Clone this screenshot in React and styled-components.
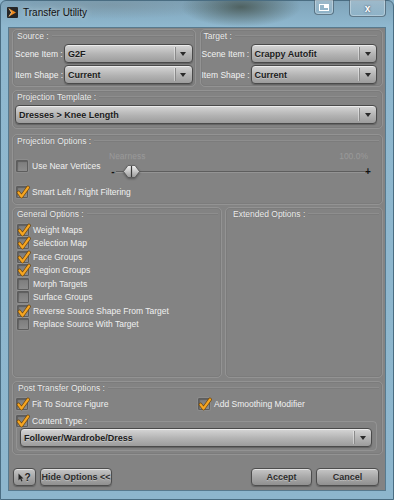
import React from "react";
import styled, { createGlobalStyle } from "styled-components";

const Global = createGlobalStyle`
  html, body { margin: 0; padding: 0; background: #8db5cc; }
  body { font-family: "Liberation Sans", Arial, sans-serif; }
  * { box-sizing: border-box; }
`;

// window frame
const Win = styled.div`
  width: 394px;
  height: 500px;
  display: flex;
  flex-direction: column;
  padding: 0 7px 8px 7px;
  border: 1px solid #4a6d82;
  border-radius: 6px 6px 0 0;
  background:
    radial-gradient(ellipse 60px 20px at 240px 6px, rgba(62, 74, 66, 0.75), transparent),
    radial-gradient(ellipse 120px 14px at 110px 4px, rgba(120, 140, 150, 0.5), transparent),
    linear-gradient(#7fa4ba 0px, #8fb8cf 26px, #8db6cd 100%);
`;

const TitleBar = styled.div`
  height: 26px;
  display: flex;
  align-items: flex-start;
  flex-shrink: 0;
`;

const AppIcon = styled.svg`
  width: 11px;
  height: 11px;
  margin: 6px 0 0 -1px;
`;

const TitleText = styled.span`
  margin: 6px 0 0 5px;
  font-size: 10px;
  color: #111;
  text-shadow: 0 0 6px rgba(255, 255, 255, 0.7);
`;

const Spacer = styled.div`
  flex: 1;
`;

const CaptionButton = styled.div`
  margin-top: -1px;
  width: ${(p) => p.$w}px;
  height: ${(p) => p.$h}px;
  margin-left: ${(p) => p.$gap || 0}px;
  border: 1px solid rgba(40, 60, 75, 0.55);
  border-top: none;
  border-radius: 0 0 4px 4px;
  background: linear-gradient(rgba(255, 255, 255, 0.25), rgba(255, 255, 255, 0.05));
  box-shadow: inset 0 0 0 1px rgba(255, 255, 255, 0.3);
  display: flex;
  align-items: center;
  justify-content: center;
  color: #fff;
  font-size: 10px;
  font-weight: bold;
  text-shadow: 0 0 2px #334;
`;

// dialog body
const Client = styled.div`
  flex: 1;
  display: flex;
  flex-direction: column;
  background: #838383;
  border: 1px solid #587a8e;
  padding: 1px 2px 4px 3px;
  color: #f0f0f0;
  font-size: 8.5px;
`;

const Row = styled.div`
  display: grid;
  grid-template-columns: 1fr 1fr;
  gap: 4px;
`;

const Group = styled.div`
  height: ${(p) => p.$h}px;
  margin-top: ${(p) => p.$mt || 0}px;
  padding: ${(p) => p.$pad || "0 3px"};
  border: 1px solid rgba(255, 255, 255, 0.13);
  border-radius: 5px;
  box-shadow: inset 0 0 0 1px rgba(0, 0, 0, 0.05);
  display: flex;
  flex-direction: column;
`;

const GroupTitle = styled.div`
  height: 11px;
  display: flex;
  align-items: center;
  gap: 3px;
  padding-left: ${(p) => p.$indent ?? 2}px;
  white-space: nowrap;
  color: #eeeeee;
  text-shadow: 0 0 1px rgba(0, 0, 0, 0.25);

  &::after {
    content: "";
    flex: 1;
    height: 0;
    border-top: 1px solid rgba(255, 255, 255, 0.09);
    border-bottom: 1px solid rgba(0, 0, 0, 0.05);
  }
`;

const FieldGrid = styled.div`
  margin-top: 3px;
  display: grid;
  grid-template-columns: 49px 1fr;
  row-gap: 2px;
  align-items: center;
`;

const FieldLabel = styled.span`
  white-space: nowrap;
  color: #f2f2f2;
`;

const ComboBox = styled.div`
  height: 19px;
  margin-top: ${(p) => p.$mt || 0}px;
  display: flex;
  align-items: center;
  border: 1px solid #4a4a4a;
  border-radius: 4px;
  background: linear-gradient(#d6d6d6, #b3b3b3 55%, #9c9c9c);
  box-shadow: inset 0 1px 0 rgba(255, 255, 255, 0.55), 0 1px 1px rgba(0, 0, 0, 0.25);
  color: #1b1b1b;
  font-weight: bold;
  font-size: 9px;
  text-shadow: 0 1px 0 rgba(255, 255, 255, 0.3);
`;

const ComboText = styled.span`
  flex: 1;
  padding-left: 3px;
  white-space: nowrap;
  overflow: hidden;
`;

const ComboArrow = styled.span`
  width: 16px;
  height: 13px;
  display: flex;
  align-items: center;
  justify-content: center;
  border-left: 1px solid #8a8a8a;
  box-shadow: -1px 0 0 rgba(255, 255, 255, 0.4);
  margin-right: 1px;

  &::after {
    content: "";
    border-left: 3px solid transparent;
    border-right: 3px solid transparent;
    border-top: 4px solid #2a2a2a;
  }
`;

const Combo = ({ children, mt }) => (
  <ComboBox $mt={mt}>
    <ComboText>{children}</ComboText>
    <ComboArrow />
  </ComboBox>
);

// check boxes
const CheckRow = styled.label`
  height: 13.5px;
  display: flex;
  align-items: center;
  gap: 4px;
  white-space: nowrap;
  margin-top: ${(p) => p.$mt || 0}px;
  color: #f0f0f0;
`;

const Box = styled.span`
  position: relative;
  width: 12px;
  height: 12px;
  flex-shrink: 0;
  border: 1px solid #5d5d5d;
  border-radius: 1px;
  background: linear-gradient(#7c7c7c, #8c8c8c);
  box-shadow: inset 1px 1px 1px rgba(0, 0, 0, 0.25), 0 0 0 1px rgba(255, 255, 255, 0.08);

  svg {
    position: absolute;
    left: -1px;
    top: -2px;
    overflow: visible;
  }
`;

const Check = ({ on, children, mt }) => (
  <CheckRow $mt={mt}>
    <Box>
      {on && (
        <svg width="14" height="14" viewBox="0 0 14 14">
          <path d="M2.5 7.5 L5.5 11.5 L12 2.5" fill="none" stroke="#6b4208" strokeWidth="3.6" strokeLinecap="round" strokeLinejoin="round" />
          <path d="M2.5 7.5 L5.5 11.5 L12 2.5" fill="none" stroke="#f5a623" strokeWidth="2.2" strokeLinecap="round" strokeLinejoin="round" />
        </svg>
      )}
    </Box>
    {children}
  </CheckRow>
);

const CheckList = styled.div`
  margin-top: ${(p) => p.$mt || 0}px;
  padding-left: 1px;
  display: flex;
  flex-direction: column;
`;

// projection options
const OptionGrid = styled.div`
  margin-top: 5px;
  display: grid;
  grid-template-columns: 93px 1fr;
  align-items: center;
`;

const SliderBlock = styled.div`
  display: flex;
  flex-direction: column;
  padding-right: 8px;
`;

const SliderLabels = styled.div`
  height: 10px;
  display: flex;
  justify-content: space-between;
  padding-right: 3px;
  color: #999999;
  text-shadow: 0 1px 0 rgba(255, 255, 255, 0.05);
`;

const SliderTrackRow = styled.div`
  height: 18px;
  margin-top: 2px;
  display: flex;
  align-items: center;
  color: #111;
  font-weight: bold;
  font-size: 10px;
`;

const PlusMinus = styled.span`
  width: 6px;
  text-align: center;
  line-height: 1;
  margin: ${(p) => (p.$end ? "0" : "0 0 0 1px")};
`;

const Track = styled.div`
  position: relative;
  flex: 1;
  height: 2px;
  border-top: 1px solid #5e5e5e;
  border-bottom: 1px solid #949494;
`;

const Thumb = styled.svg`
  position: absolute;
  top: -9px;
  width: 17px;
  height: 17px;
  filter: drop-shadow(0 1px 1px rgba(0, 0, 0, 0.35));
`;

// extended/general split
const SplitRow = styled.div`
  margin-top: 2px;
  display: grid;
  grid-template-columns: 210px 1fr;
  gap: 3px;
`;

const PostGrid = styled.div`
  margin-top: 4px;
  display: grid;
  grid-template-columns: 182px 1fr;
`;

const InnerSet = styled.fieldset`
  margin: 4px 2px 0 0;
  padding: 0 4px 3px 3px;
  border: 1px solid rgba(255, 255, 255, 0.13);
  border-radius: 4px;
  min-width: 0;
`;

const InnerLegend = styled.legend`
  padding: 0 2px 0 0;
  margin-left: -4px;
`;

// buttons
const ButtonBar = styled.div`
  margin-top: 13px;
  padding: 0 4px 0 1px;
  display: flex;
  gap: 4px;
`;

const Button = styled.button`
  height: 18px;
  width: ${(p) => p.$w}px;
  padding: 0;
  margin-left: ${(p) => (p.$push ? "auto" : "0")};
  display: flex;
  align-items: center;
  justify-content: center;
  border: 1px solid #4d4d4d;
  border-radius: 4px;
  background: linear-gradient(#c6c6c6, #a6a6a6 55%, #909090);
  box-shadow: inset 0 1px 0 rgba(255, 255, 255, 0.5), 0 1px 1px rgba(0, 0, 0, 0.25);
  font-family: "Liberation Sans", Arial, sans-serif;
  font-size: 9px;
  font-weight: bold;
  color: #2c2c2c;
  text-shadow: 0 1px 0 rgba(255, 255, 255, 0.3);
`;

const HelpMark = styled.span`
  display: flex;
  align-items: center;
  font-size: 10px;
  color: #222;
`;

export default function App() {
  return (
    <>
      <Global />
      <Win>
        <TitleBar>
          <AppIcon viewBox="0 0 11 11">
            <rect width="11" height="11" rx="1" fill="#262626" />
            <path d="M2 1.5 L9 5.5 L2 9.5 L4.5 5.5 Z" fill="#f08a1c" />
            <path d="M2 1.5 L4.5 5.5 L2 9.5" fill="none" stroke="#ffd9a0" strokeWidth="0.8" />
          </AppIcon>
          <TitleText>Transfer Utility</TitleText>
          <Spacer />
          <CaptionButton $w={20} $h={15}>
            <svg width="10" height="7" viewBox="0 0 10 7">
              <rect x="0.5" y="0.5" width="9" height="6" fill="none" stroke="#fff" />
              <rect x="5" y="1" width="4" height="3" fill="#fff" />
            </svg>
          </CaptionButton>
          <CaptionButton $w={37} $h={17} $gap={15}>x</CaptionButton>
        </TitleBar>

        <Client>
          <Row>
            <Group $h={58} $pad="0 2px 0 2px">
              <GroupTitle>Source :</GroupTitle>
              <FieldGrid>
                <FieldLabel>Scene Item :</FieldLabel>
                <Combo>G2F</Combo>
                <FieldLabel>Item Shape :</FieldLabel>
                <Combo>Current</Combo>
              </FieldGrid>
            </Group>
            <Group $h={58} $pad="0 5px 0 1px">
              <GroupTitle>Target :</GroupTitle>
              <FieldGrid>
                <FieldLabel>Scene Item :</FieldLabel>
                <Combo>Crappy Autofit</Combo>
                <FieldLabel>Item Shape :</FieldLabel>
                <Combo>Current</Combo>
              </FieldGrid>
            </Group>
          </Row>

          <Group $h={39} $mt={3} $pad="0 5px 0 2px">
            <GroupTitle>Projection Template :</GroupTitle>
            <Combo mt={3}>Dresses &gt; Knee Length</Combo>
          </Group>

          <Group $h={71} $mt={5} $pad="0 3px 0 3px">
            <GroupTitle $indent={1}>Projection Options :</GroupTitle>
            <OptionGrid>
              <Check>Use Near Vertices</Check>
              <SliderBlock>
                <SliderLabels>
                  <span>Nearness</span>
                  <span>100.0%</span>
                </SliderLabels>
                <SliderTrackRow>
                  <PlusMinus>-</PlusMinus>
                  <Track>
                    <Thumb viewBox="0 0 17 17" style={{ left: "7px" }}>
                      <defs>
                        <linearGradient id="thumbFill" x1="0" y1="0" x2="0" y2="1">
                          <stop offset="0" stopColor="#f2f2f2" />
                          <stop offset="1" stopColor="#9a9a9a" />
                        </linearGradient>
                      </defs>
                      <path d="M0.5 8.5 L5 2.5 L12 2.5 L16.5 8.5 L12 14.5 L5 14.5 Z" fill="url(#thumbFill)" stroke="#555" strokeWidth="0.8" />
                      <line x1="8.5" y1="3" x2="8.5" y2="14" stroke="#3a3a3a" strokeWidth="1.2" />
                    </Thumb>
                  </Track>
                  <PlusMinus $end>+</PlusMinus>
                </SliderTrackRow>
              </SliderBlock>
            </OptionGrid>
            <Check on mt={4}>Smart Left / Right Filtering</Check>
          </Group>

          <SplitRow>
            <Group $h={171} $pad="0 3px 0 3px">
              <GroupTitle $indent={1}>General Options :</GroupTitle>
              <CheckList $mt={4}>
                <Check on>Weight Maps</Check>
                <Check on>Selection Map</Check>
                <Check on>Face Groups</Check>
                <Check on>Region Groups</Check>
                <Check>Morph Targets</Check>
                <Check>Surface Groups</Check>
                <Check on>Reverse Source Shape From Target</Check>
                <Check>Replace Source With Target</Check>
              </CheckList>
            </Group>
            <Group $h={171} $pad="0 3px 0 5px">
              <GroupTitle>Extended Options :</GroupTitle>
            </Group>
          </SplitRow>

          <Group $h={74} $mt={3} $pad="0 3px 0 3px">
            <GroupTitle $indent={2}>Post Transfer Options :</GroupTitle>
            <PostGrid>
              <Check on>Fit To Source Figure</Check>
              <Check on>Add Smoothing Modifier</Check>
            </PostGrid>
            <InnerSet>
              <InnerLegend>
                <Check on>Content Type :</Check>
              </InnerLegend>
              <Combo>Follower/Wardrobe/Dress</Combo>
            </InnerSet>
          </Group>

          <ButtonBar>
            <Button $w={23}>
              <HelpMark>
                <svg width="6" height="9" viewBox="0 0 6 9">
                  <path d="M0.5 0.5 L0.5 7.5 L2.2 5.8 L3.4 8.5 L4.5 8 L3.3 5.4 L5.5 5.4 Z" fill="#222" />
                </svg>
                ?
              </HelpMark>
            </Button>
            <Button $w={72}>Hide Options &lt;&lt;</Button>
            <Button $w={61} $push>Accept</Button>
            <Button $w={63}>Cancel</Button>
          </ButtonBar>
        </Client>
      </Win>
    </>
  );
}
